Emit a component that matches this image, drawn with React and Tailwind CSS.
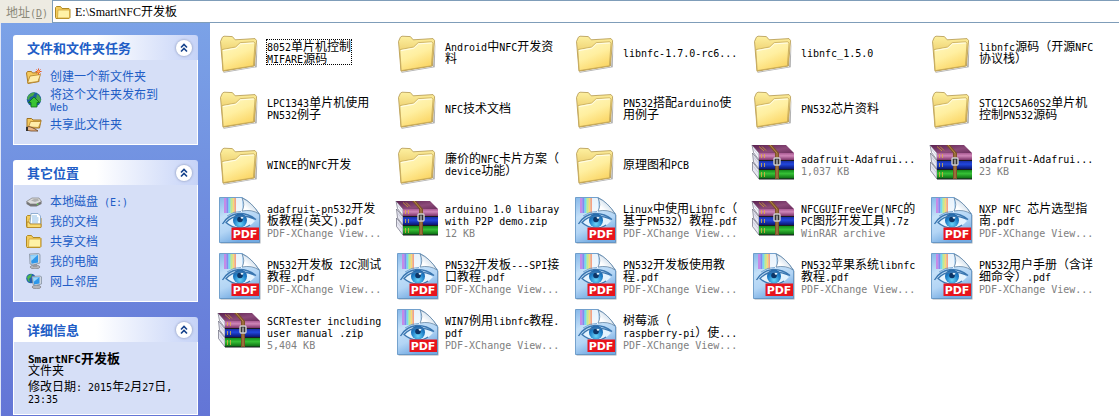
import { useState } from "react";

const VIEWER = "PDF-XChange View...";

const files = [
  { type: "folder", name: "8052单片机控制\nMIFARE源码", focused: true },
  { type: "folder", name: "Android中NFC开发资\n料" },
  { type: "folder", name: "libnfc-1.7.0-rc6..." },
  { type: "folder", name: "libnfc_1.5.0" },
  { type: "folder", name: "libnfc源码（开源NFC\n协议栈）" },
  { type: "folder", name: "LPC1343单片机使用\nPN532例子" },
  { type: "folder", name: "NFC技术文档" },
  { type: "folder", name: "PN532搭配arduino使\n用例子" },
  { type: "folder", name: "PN532芯片资料" },
  { type: "folder", name: "STC12C5A60S2单片机\n控制PN532源码" },
  { type: "folder", name: "WINCE的NFC开发" },
  { type: "folder", name: "廉价的NFC卡片方案（\ndevice功能）" },
  { type: "folder", name: "原理图和PCB" },
  { type: "rar", name: "adafruit-Adafrui...", info: "1,037 KB" },
  { type: "rar", name: "adafruit-Adafrui...", info: "23 KB" },
  { type: "pdf", name: "adafruit-pn532开发\n板教程(英文).pdf", info: VIEWER },
  { type: "rar", name: "arduino 1.0 libaray\nwith P2P demo.zip", info: "12 KB" },
  { type: "pdf", name: "Linux中使用Libnfc（\n基于PN532）教程.pdf", info: VIEWER },
  { type: "rar", name: "NFCGUIFreeVer(NFC的\nPC图形开发工具).7z", info: "WinRAR archive" },
  { type: "pdf", name: "NXP NFC 芯片选型指\n南.pdf", info: VIEWER },
  { type: "pdf", name: "PN532开发板 I2C测试\n教程.pdf", info: VIEWER },
  { type: "pdf", name: "PN532开发板---SPI接\n口教程.pdf", info: VIEWER },
  { type: "pdf", name: "PN532开发板使用教\n程.pdf", info: VIEWER },
  { type: "pdf", name: "PN532苹果系统libnfc\n教程.pdf", info: VIEWER },
  { type: "pdf", name: "PN532用户手册（含详\n细命令）.pdf", info: VIEWER },
  { type: "rar", name: "SCRTester including\nuser manual .zip", info: "5,404 KB" },
  { type: "pdf", name: "WIN7例用libnfc教程.\npdf", info: VIEWER },
  { type: "pdf", name: "树莓派（\nraspberry-pi）使...", info: VIEWER },
];

// Latin runs are set half as wide as a Chinese character
function Mixed({ text, size = "text-[10px]" }) {
  return text.split(/([\x20-\x7e]+)/).map((part, i) =>
    i % 2 ? (
      <span key={i} className={`font-['DejaVu_Sans_Mono',monospace] leading-0 ${size}`}>
        {part}
      </span>
    ) : (
      part
    )
  );
}

function FolderIcon({ className }) {
  return (
    <svg viewBox="0 0 48 48" className={className} aria-hidden="true">
      <defs>
        <linearGradient id="folderFront" x1="0" y1="0" x2="0.5" y2="1">
          <stop offset="0" stopColor="#fff9c4" />
          <stop offset="0.55" stopColor="#ffefa0" />
          <stop offset="1" stopColor="#fbd768" />
        </linearGradient>
        <linearGradient id="folderBack" x1="0" y1="0" x2="0" y2="1">
          <stop offset="0" stopColor="#fdf0a0" />
          <stop offset="1" stopColor="#dcaa35" />
        </linearGradient>
      </defs>
      <path d="M8 44 40 38.8 42.4 14l-.6 25.200L9 44.800z" fill="#666" opacity="0.5" />
      <path
        d="M5.500 13.500 7.400 9.200 9 8.200l8.400.4 2.800 3.200L40 10.600l1.600 2L39.400 38 8 43.200z"
        fill="url(#folderBack)"
        stroke="#b3974f"
        strokeWidth="0.8"
        strokeLinejoin="round"
      />
      <path
        d="M6.800 21.600 20.600 19l4.600-4.400 13.600-.8 1.200 1.600-1.600 22.400L8.200 42.600z"
        fill="url(#folderFront)"
        stroke="#c4a85a"
        strokeWidth="0.8"
        strokeLinejoin="round"
      />
      <path d="M8 22.600 21 20.200l4.600-4.400L38.800 15" fill="none" stroke="#fffde8" />
    </svg>
  );
}

function RarIcon({ className }) {
  return (
    <svg viewBox="0 0 48 48" className={className} aria-hidden="true">
      <defs>
        <linearGradient id="rarPurple" x1="0" y1="0" x2="0" y2="1">
          <stop offset="0" stopColor="#a95a93" />
          <stop offset="0.4" stopColor="#cf86b8" />
          <stop offset="1" stopColor="#7c3268" />
        </linearGradient>
        <linearGradient id="rarBlue" x1="0" y1="0" x2="0" y2="1">
          <stop offset="0" stopColor="#1a2fa8" />
          <stop offset="0.4" stopColor="#2147dc" />
          <stop offset="1" stopColor="#0a1670" />
        </linearGradient>
        <linearGradient id="rarGreen" x1="0" y1="0" x2="0" y2="1">
          <stop offset="0" stopColor="#128a1c" />
          <stop offset="0.4" stopColor="#36c036" />
          <stop offset="1" stopColor="#08640f" />
        </linearGradient>
        <linearGradient id="rarTop" x1="0" y1="0" x2="1" y2="1">
          <stop offset="0" stopColor="#5a2150" />
          <stop offset="0.6" stopColor="#8c4a79" />
          <stop offset="1" stopColor="#6e2f5f" />
        </linearGradient>
      </defs>
      <path d="M3 5 10 13v7L4.500 12.500z" fill="#f4f4fa" stroke="#55556a" strokeWidth="0.6" />
      <path d="M3.500 13 10 21v8l-5.500-7z" fill="#e6e6f0" stroke="#55556a" strokeWidth="0.6" />
      <path d="M3.500 22 10 30v9l-6.500-8.500z" fill="#e6e6f0" stroke="#55556a" strokeWidth="0.6" />
      <path d="m4.500 9 5.500 7M4.500 17l5.500 7M4.500 26.500l5.500 7" stroke="#b9b9cc" strokeWidth="0.6" />
      <path d="M3 5h34l8 8H10z" fill="url(#rarTop)" />
      <path d="m10 6.500 5 4.500M13 6.500l4 4" stroke="#c0923a" />
      <rect x="10" y="13" width="35" height="7" fill="url(#rarPurple)" />
      <rect x="10" y="21" width="35" height="8" fill="url(#rarBlue)" />
      <rect x="10" y="30" width="35" height="9" fill="url(#rarGreen)" />
      <path d="M10 20.500h35M10 29.500h35M10 39h35" stroke="#1b1b22" />
      <path d="M12.500 14v4M15.500 14v4M12.500 23v4M15.500 23v4M12.500 32v5M15.500 32v5" stroke="#e0b040" strokeWidth="0.8" />
      <path d="M19 5h4l7 8v26h-4V13z" fill="#7d5228" />
      <path d="m21 5 7 8v25" fill="none" stroke="#b98a4e" />
      <rect x="25" y="18" width="6" height="7" rx="1" fill="#333" stroke="#d0d0d0" strokeWidth="1.400" />
      <path d="M28 19.500v5" stroke="#eee" />
    </svg>
  );
}

function PdfIcon({ className }) {
  return (
    <svg viewBox="0 0 48 48" className={className} aria-hidden="true">
      <defs>
        <linearGradient id="pdfPage" x1="0" y1="0" x2="0.4" y2="1">
          <stop offset="0" stopColor="#86b8ea" />
          <stop offset="0.4" stopColor="#c4e0f8" />
          <stop offset="0.7" stopColor="#b3d5f5" />
          <stop offset="1" stopColor="#74abe2" />
        </linearGradient>
        <linearGradient id="pdfFold" x1="0" y1="1" x2="1" y2="0">
          <stop offset="0.3" stopColor="#ffffff" />
          <stop offset="1" stopColor="#9fbdd8" />
        </linearGradient>
        <radialGradient id="pdfIris" cx="0.5" cy="0.75" r="0.7">
          <stop offset="0" stopColor="#6cd4f7" />
          <stop offset="0.6" stopColor="#2284cc" />
          <stop offset="1" stopColor="#155fa6" />
        </radialGradient>
      </defs>
      <path d="M5.500 2.500h23L45.500 19v28.500h-40z" fill="#6b7885" opacity="0.6" />
      <path d="M4.500 1.500h22.500Q36 6 44.500 18v28.500h-40z" fill="url(#pdfPage)" stroke="#5b8fc2" strokeWidth="0.8" />
      <path d="M21 2h6v14l-6 1z" fill="#fff" opacity="0.75" />
      <path d="M9 2h2.500v15H9z" fill="#c58ae6" />
      <path d="M11.500 2h2v15h-2z" fill="#8488f0" />
      <path d="M13.500 2h2v15h-2z" fill="#74dcea" />
      <path d="M15.500 2h2v15h-2z" fill="#c0ec8c" />
      <path d="M17.500 2h2v15h-2z" fill="#fcd873" />
      <path d="M19.500 2H21v15h-1.500z" fill="#f7a184" />
      <path d="M27 2q3.500 7 0 13 10-2 17 3Q37 6 27 2z" fill="url(#pdfFold)" stroke="#55789a" strokeWidth="0.7" />
      <path d="M10 26q7-7 15-7t15 6q-6 7-15 7t-15-6z" fill="#e4f3fe" />
      <circle cx="25" cy="24.500" r="7" fill="url(#pdfIris)" />
      <circle cx="25" cy="23.500" r="2.800" fill="#0d3566" />
      <circle cx="27" cy="21.500" r="1.300" fill="#e8f6ff" />
      <path
        d="M7.500 28Q13 18.500 24 17.500q10 0 17 6Q33 20 25 20T11 26.500q6 5.500 14 5.500 6 0 10-3"
        fill="none"
        stroke="#3a76b0"
        strokeWidth="1.300"
      />
      <path d="M12 20q7-5 14-4.500" fill="none" stroke="#5f95c8" strokeWidth="0.8" />
      <rect x="16.500" y="31.500" width="27.500" height="12.500" fill="#e8141c" />
      <text
        x="30"
        y="42"
        textAnchor="middle"
        fill="#fff"
        fontFamily="DejaVu Sans"
        fontWeight="bold"
        fontSize="11"
      >
        PDF
      </text>
    </svg>
  );
}

function SmallFolder({ children }) {
  return (
    <svg viewBox="0 0 16 16" className="size-4 shrink-0" aria-hidden="true">
      <path d="M.5 13.500v-10l1-1h4l1.500 2h7l1 1v8l-1 1h-13z" fill="#f3cb5c" stroke="#b08a24" />
      <path d="M3 6h11.500v8H2.500z" fill="#fff2a6" stroke="#cfa53a" strokeWidth="0.8" />
      {children}
    </svg>
  );
}

function NewFolderIcon() {
  return (
    <svg viewBox="0 0 16 16" className="size-4 shrink-0" aria-hidden="true">
      <path d="M.5 5 1.500 3.500l4 0 1 1.500 6-.5.5 9-11 2z" fill="#f5c95c" stroke="#ad7a26" />
      <path d="m1.500 15 2.500-7 10.500-1.500L12 13.500z" fill="#ffedaa" stroke="#b98a30" strokeWidth="0.9" />
      <path d="M12.500.5v6M9.500 3.500h6M10.500 1.500l4 4M14.500 1.500l-4 4" stroke="#e4582a" />
      <circle cx="12.500" cy="3.500" r="1.300" fill="#ffb25c" />
    </svg>
  );
}

function PublishIcon() {
  return (
    <svg viewBox="0 0 16 16" className="size-4 shrink-0" aria-hidden="true">
      <circle cx="8" cy="7.500" r="7.200" fill="#1c5f9e" />
      <path d="M2 4q3-4 7-3.500L7 4 4 5 3 8 1 7zM11 2q4 3 4 7l-3 2-2-4z" fill="#48a84a" />
      <path d="m8 5 5.500 5.500H11V15H5v-4.500H2.500z" fill="#39c433" stroke="#0c6b18" strokeWidth="0.8" />
    </svg>
  );
}

function ShareIcon() {
  return (
    <svg viewBox="0 0 16 16" className="size-4 shrink-0" aria-hidden="true">
      <path d="M1 2.500h4.500L7 4h8l-1.500 8H1z" fill="#f5c95c" stroke="#9e7123" />
      <path d="m2.500 11 2-5.500H15l-2.500 6z" fill="#ffedaa" stroke="#b98a30" strokeWidth="0.9" />
      <path d="M0 11.500q3-2 6 0l3 1.500 3 2H5L0 14z" fill="#e9b585" stroke="#6b4220" strokeWidth="0.8" />
      <path d="M0 11h2v4H0z" fill="#333" />
    </svg>
  );
}

function DiskIcon() {
  return (
    <svg viewBox="0 0 16 16" className="size-4 shrink-0" aria-hidden="true">
      <path d="M.5 8.500 6 5h7l2.500 3.500-5 2.500h-6z" fill="#dcdcdc" stroke="#8a8a8a" strokeWidth="0.8" />
      <path d="m.5 8.500 4 2.500h6l5-2.500V11l-5 2.500h-6L.5 11z" fill="#757575" />
      <path d="M5 7.500 8 6h4l1 1.500-4 1.500z" fill="#b0b0b0" />
      <circle cx="11.500" cy="11.300" r="0.800" fill="#5ee04c" />
    </svg>
  );
}

function DocumentsIcon() {
  return (
    <SmallFolder>
      <path d="M5 .5h7l2.500 2.500v8H4z" fill="#fff" stroke="#7ba0c8" strokeWidth="0.8" />
      <path d="M6 3h5M6 5h6.500M6 7h6.500M6 9h6" stroke="#6aa8e0" strokeWidth="0.8" />
      <path d="M1 9h2l1 2h11v3.500H1z" fill="#f9da72" stroke="#b08424" strokeWidth="0.8" />
    </SmallFolder>
  );
}

function ComputerIcon() {
  return (
    <svg viewBox="0 0 16 16" className="size-4 shrink-0" aria-hidden="true">
      <ellipse cx="9" cy="14" rx="5" ry="1.800" fill="#b6b6bb" stroke="#77777d" strokeWidth="0.6" />
      <path d="M7 11h4v3H7z" fill="#9a9aa2" />
      <path d="m3.500 1 9-.5 1.500 1v8.500l-7 2-3-1z" fill="#cfd6de" stroke="#7c8a9a" strokeWidth="0.7" />
      <path d="m4.500 2 7.500-.3v7.800l-6.500 1.300z" fill="#2f97ea" />
      <path d="m4.700 2.200 7-.2L5.200 8z" fill="#9cd7fb" />
    </svg>
  );
}

function NetworkIcon() {
  return (
    <svg viewBox="0 0 16 16" className="size-4 shrink-0" aria-hidden="true">
      <circle cx="5" cy="5.500" r="4.800" fill="#2361b0" />
      <path d="M1 4q2-3 5-3L5 4 3 6l1 3-2-1zM6 6l3-1v4z" fill="#4cb84c" />
      <ellipse cx="10.500" cy="14" rx="4.500" ry="1.700" fill="#b6b6bb" stroke="#77777d" strokeWidth="0.6" />
      <path d="m6 3.500 8-.5 1.500.8v7.200l-6 1.500-2.500-1z" fill="#cfd6de" stroke="#7c8a9a" strokeWidth="0.7" />
      <path d="m7 4.400 6.500-.3v6.400l-5.500 1z" fill="#2f97ea" />
      <path d="m7 4.400 6.300-.2L7.600 9z" fill="#9cd7fb" />
    </svg>
  );
}

const icons = { folder: FolderIcon, rar: RarIcon, pdf: PdfIcon };

function FileItem({ file }) {
  const Icon = icons[file.type];
  return (
    <li className="h-14">
      <a href="#" className="flex h-full items-center gap-1">
        <Icon className="size-12 shrink-0" />
        <span
          className={`whitespace-pre leading-3 ${
            file.focused ? "outline-1 outline-dotted outline-black" : ""
          }`}
        >
          <Mixed text={file.name} />
          {file.info && (
            <span className="block text-[#808080]">
              <Mixed text={file.info} />
            </span>
          )}
        </span>
      </a>
    </li>
  );
}

function Panel({ title, children }) {
  const [open, setOpen] = useState(true);
  return (
    <section>
      <h2 className="flex h-[25px] items-center justify-between rounded-t-[3px] bg-linear-to-r from-white from-45% to-[#c6d3f7] pr-1.5 pl-3.5 text-[13px] font-bold text-[#215dc6]">
        {title}
        <button
          type="button"
          aria-label={title}
          aria-expanded={open}
          onClick={() => setOpen(!open)}
          className="size-4 rounded-full bg-white shadow-[0_0_2px_1px_#a9b5d6]"
        >
          <svg viewBox="0 0 16 16" className="size-4" aria-hidden="true">
            <path d="m5 7.500 3-3 3 3M5 11.500l3-3 3 3" fill="none" stroke="#15428b" strokeWidth="1.600" />
          </svg>
        </button>
      </h2>
      {open && <div className="border border-t-0 border-white bg-[#d6dff7]">{children}</div>}
    </section>
  );
}

function TaskLink({ icon, text }) {
  return (
    <li>
      <a href="#" className="flex min-h-4 items-center gap-2 leading-3 text-[#215dc6]">
        {icon}
        <span className="whitespace-pre">
          <Mixed text={text} />
        </span>
      </a>
    </li>
  );
}

export default function App() {
  const [path, setPath] = useState("E:\\SmartNFC开发板");

  return (
    <div className="flex min-h-screen flex-col bg-white font-['Noto_Sans_CJK_SC',sans-serif] text-xs text-black">
      <header className="flex h-[23px] bg-[#edebe2]">
        <label htmlFor="address" className="flex w-[52px] items-center pl-1.5 text-[#8b8979]">
          <span className="whitespace-pre leading-3">
            地址
            <Mixed text="(" />
            <span className="font-['DejaVu_Sans_Mono',monospace] text-[10px] leading-0 underline">D</span>
            <Mixed text=")" />
          </span>
        </label>
        <div className="flex flex-1 items-center gap-1 border border-r-0 border-[#7f9db9] bg-white pl-0.5">
          <SmallFolder />
          <input
            id="address"
            value={path}
            onChange={(e) => setPath(e.target.value)}
            className="h-4 flex-1 font-['Liberation_Serif','Noto_Sans_CJK_SC',serif] text-xs outline-none"
          />
        </div>
      </header>

      <div className="flex flex-1">
        <aside className="flex w-[210px] shrink-0 flex-col gap-[15px] border-l border-[#dfe6f7] bg-linear-to-b from-[#7ba2e7] to-[#6375d6] px-3 pt-3">
          <Panel title="文件和文件夹任务">
            <ul className="flex flex-col gap-1 px-3 pt-2 pb-3">
              <TaskLink icon={<NewFolderIcon />} text="创建一个新文件夹" />
              <TaskLink icon={<PublishIcon />} text={"将这个文件夹发布到\nWeb"} />
              <TaskLink icon={<ShareIcon />} text="共享此文件夹" />
            </ul>
          </Panel>
          <Panel title="其它位置">
            <ul className="flex flex-col gap-1 px-3 pt-2 pb-3">
              <TaskLink icon={<DiskIcon />} text="本地磁盘 (E:)" />
              <TaskLink icon={<DocumentsIcon />} text="我的文档" />
              <TaskLink icon={<SmallFolder />} text="共享文档" />
              <TaskLink icon={<ComputerIcon />} text="我的电脑" />
              <TaskLink icon={<NetworkIcon />} text="网上邻居" />
            </ul>
          </Panel>
          <Panel title="详细信息">
            <div className="px-3.5 py-2.5 leading-3">
              <p className="text-[13px] leading-3 font-bold">
                <Mixed text="SmartNFC开发板" size="text-[11px]" />
              </p>
              <p>文件夹</p>
              <p className="mt-1 whitespace-pre">
                <Mixed text={"修改日期: 2015年2月27日,\n23:35"} />
              </p>
            </div>
          </Panel>
        </aside>

        <main className="flex-1 pt-px pl-[5px]">
          <ul className="grid grid-cols-[repeat(auto-fill,178px)]">
            {files.map((file, i) => (
              <FileItem key={i} file={file} />
            ))}
          </ul>
        </main>
      </div>
    </div>
  );
}
